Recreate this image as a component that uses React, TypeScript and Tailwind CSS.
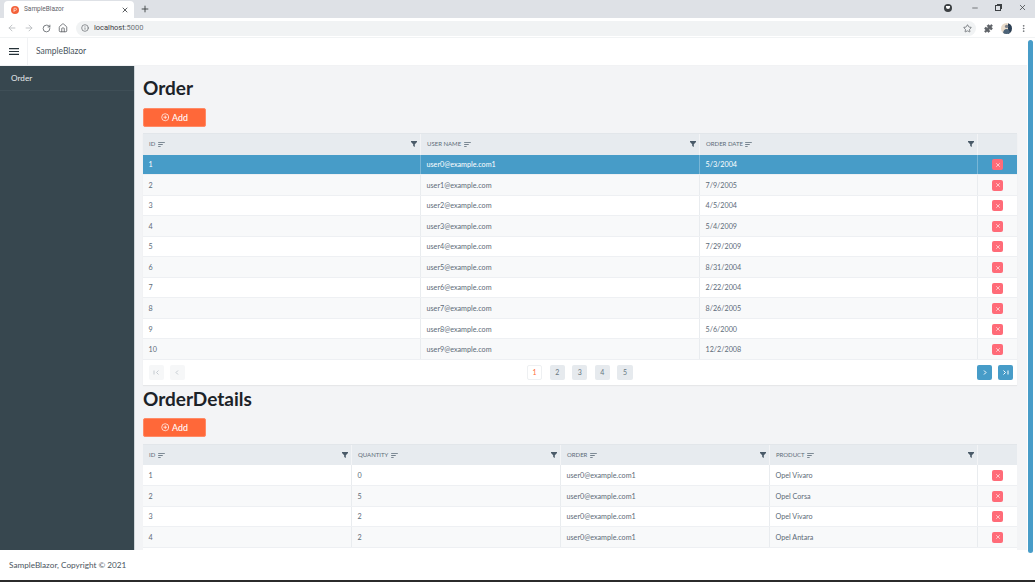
import React from "react";
import {
  ArrowLeft,
  ArrowRight,
  RotateCw,
  Home,
  Info,
  Star,
  Puzzle,
  EllipsisVertical,
  X,
  Plus,
  Minus,
  CirclePlus,
} from "lucide-react";

const FONT = "font-['Lato','Noto_Sans',sans-serif]";

const orders = [
  ["1", "user0@example.com1", "5/3/2004"],
  ["2", "user1@example.com", "7/9/2005"],
  ["3", "user2@example.com", "4/5/2004"],
  ["4", "user3@example.com", "5/4/2009"],
  ["5", "user4@example.com", "7/29/2009"],
  ["6", "user5@example.com", "8/31/2004"],
  ["7", "user6@example.com", "2/22/2004"],
  ["8", "user7@example.com", "8/26/2005"],
  ["9", "user8@example.com", "5/6/2000"],
  ["10", "user9@example.com", "12/2/2008"],
];

const details = [
  ["1", "0", "user0@example.com1", "Opel Vivaro"],
  ["2", "5", "user0@example.com1", "Opel Corsa"],
  ["3", "2", "user0@example.com1", "Opel Vivaro"],
  ["4", "2", "user0@example.com1", "Opel Antara"],
];

const SortIcon = () => (
  <svg width="7" height="5" viewBox="0 0 8 6" className="ml-[2.5px]">
    <path d="M0 .5h8M0 3h5.5M0 5.5h3" stroke="#5b6b78" strokeWidth="1" fill="none" />
  </svg>
);

const FilterIcon = () => (
  <svg width="6" height="6" viewBox="0 0 6 6">
    <path d="M0 0h6v1L3.8 3.2V6L2.2 5V3.2L0 1z" fill="#4a5a68" />
  </svg>
);

const AddButton = () => (
  <button className="flex h-[19px] w-[62.5px] items-center justify-center gap-[3px] rounded-[2px] border border-[#ff8a66] bg-[#ff6839] text-[8.8px] font-medium text-white">
    <CirclePlus size={8.5} strokeWidth={2} />
    Add
  </button>
);

const DeleteButton = () => (
  <div className="flex h-[11px] w-[11px] items-center justify-center rounded-[2px] bg-[#ff6b78]">
    <X size={6} strokeWidth={3} className="text-[#ffe3e3]" />
  </div>
);

const PageButton = ({ children, active }: { children: React.ReactNode; active?: boolean }) => (
  <div
    className={
      active
        ? "flex h-[15px] w-[15.2px] items-center justify-center rounded-[2px] border border-[#eef0f2] bg-white text-[7px] text-[#ff6839]"
        : "flex h-[15px] w-[15.2px] items-center justify-center rounded-[2px] bg-[#e6eaee] text-[7px] text-[#66757f]"
    }
  >
    {children}
  </div>
);

const NavButton = ({ d, enabled }: { d: string; enabled?: boolean }) => (
  <div
    className={
      enabled
        ? "flex h-[15px] w-[15px] items-center justify-center rounded-[2px] bg-[#479cc8]"
        : "flex h-[15px] w-[15px] items-center justify-center rounded-[2px] bg-[#f6f7f8]"
    }
  >
    <svg width="7" height="5" viewBox="0 0 7 5">
      <path d={d} stroke={enabled ? "#ffffff" : "#c4cad0"} strokeWidth="1" fill="none" />
    </svg>
  </div>
);

function DataTable({
  headers,
  rows,
  columns,
  selected,
}: {
  headers: string[];
  rows: string[][];
  columns: string;
  selected?: number;
}) {
  return (
    <div className="w-[874px] text-[7.2px] leading-none text-[#5d6b78]">
      <div className="grid h-[21.5px] border-t border-[#e2e6ea] bg-[#e7ebef]" style={{ gridTemplateColumns: columns }}>
        {headers.map((h) => (
          <div key={h} className="flex items-center justify-between border-r border-[#f3f4f6] pl-[6px] pr-[3px]">
            <div className="flex items-center text-[6px] text-[#5d6b78]">
              {h}
              <SortIcon />
            </div>
            <FilterIcon />
          </div>
        ))}
        <div />
      </div>
      {rows.map((row, i) => {
        const isSelected = i === selected;
        const stripe = isSelected ? "bg-[#479cc8] text-white" : i % 2 === 0 ? "bg-white" : "bg-[#f8f9fa]";
        return (
          <div
            key={row[0]}
            className={`grid h-[20.55px] border-b border-[#eef0f3] ${stripe}`}
            style={{ gridTemplateColumns: columns }}
          >
            {row.map((cell, j) => (
              <div
                key={j}
                className={`flex items-center border-r pl-[5.5px] pt-[1px] ${isSelected ? "border-[#79b6d6]" : "border-[#e9ecef]"}`}
              >
                {cell}
              </div>
            ))}
            <div className="flex items-center justify-center pt-[1px]">
              <DeleteButton />
            </div>
          </div>
        );
      })}
    </div>
  );
}

export default function App() {
  return (
    <div className={`flex h-[582px] w-[1035px] flex-col overflow-hidden bg-white ${FONT}`}>
      {/* browser tab strip */}
      <div className="flex h-[18px] items-end bg-[#dee1e6] font-['Roboto',sans-serif]">
        <div className="ml-[4px] flex h-[17px] w-[130px] items-center rounded-t-[4px] bg-white pl-[7px] pr-[5px]">
          <svg width="8" height="8" viewBox="0 0 8 8">
            <circle cx="4" cy="4" r="4" fill="#f4623a" />
            <path d="M3 6V2.2h1.4a1 1 0 010 2.2H3" stroke="#ffe0d6" strokeWidth="0.8" fill="none" />
          </svg>
          <span className="ml-[5px] text-[6.5px] text-[#5f6368]">SampleBlazor</span>
          <X size={8} strokeWidth={2.5} className="ml-auto text-[#3c4043]" />
        </div>
        <Plus size={10} strokeWidth={2.2} className="mb-[4px] ml-[6px] text-[#3c4043]" />
        <div className="mb-[6px] ml-auto flex items-center pr-[8px]">
          <div className="mr-[19px] flex h-[8px] w-[8px] items-center justify-center rounded-full bg-[#3c4043]">
            <div className="h-[3px] w-[4px] rounded-b-full bg-white" />
          </div>
          <Minus size={8} className="mr-[16px] text-[#3c4043]" />
          <div className="relative mr-[17px] h-[6px] w-[6px] border border-[#3c4043]">
            <div className="absolute -right-[2px] -top-[2px] h-[5px] w-[5px] border-r border-t border-[#3c4043]" />
          </div>
          <X size={9} className="text-[#3c4043]" />
        </div>
      </div>
      {/* browser toolbar */}
      <div className="flex h-[19px] items-center bg-white pl-[7px] pt-[1px]">
        <ArrowLeft size={10} className="shrink-0 text-[#b5b8bc]" />
        <ArrowRight size={10} className="ml-[7px] shrink-0 text-[#b5b8bc]" />
        <RotateCw size={9} strokeWidth={2.2} className="ml-[7.5px] shrink-0 text-[#5f6368]" />
        <Home size={10} strokeWidth={2} className="ml-[7.5px] shrink-0 text-[#5f6368]" />
        <div className="ml-[8px] flex h-[15px] w-[900px] shrink-0 items-center rounded-full bg-[#f1f3f4] pl-[5px] pr-[4.5px]">
          <Info size={8} className="text-[#5f6368]" />
          <span className="ml-[5px] font-['Roboto',sans-serif] text-[7.5px] text-[#3c4043]">
            localhost<span className="text-[#70757a]">:5000</span>
          </span>
          <Star size={9} className="ml-auto text-[#5f6368]" />
        </div>
        <Puzzle size={9} fill="#5f6368" className="ml-[8px] shrink-0 text-[#5f6368]" />
        <svg width="11" height="11" viewBox="0 0 11 11" className="ml-[7.5px] shrink-0">
          <defs>
            <clipPath id="avatar">
              <circle cx="5.5" cy="5.5" r="5.5" />
            </clipPath>
          </defs>
          <g clipPath="url(#avatar)">
            <rect width="11" height="11" fill="#e9dccb" />
            <rect x="7" width="4" height="11" fill="#2a3f55" />
            <circle cx="5.6" cy="3.4" r="1.7" fill="#7d8088" />
            <path d="M2 11c0-3.5 1.5-5 3.6-5S9 7.5 9 11z" fill="#4c6378" />
          </g>
        </svg>
        <EllipsisVertical size={9} className="ml-[7px] shrink-0 text-[#5f6368]" />
      </div>
      <div className="h-[1px] bg-[#f1f3f4]" />
      {/* app */}
      <div className="flex min-h-0 flex-1">
        <div className="flex min-w-0 flex-1 flex-col">
          <div className="flex h-[28px] items-center border-b border-[#f1f2f4] bg-white">
            <div className="flex h-full w-[28px] items-center justify-center border-r border-[#f1f2f4]">
              <svg width="10" height="7" viewBox="0 0 10 7">
                <path d="M0 .6h10M0 3.5h10M0 6.4h10" stroke="#263238" strokeWidth="1.1" />
              </svg>
            </div>
            <span className="ml-[8px] text-[8.5px] text-[#4a5560]">SampleBlazor</span>
          </div>
          <div className="flex min-h-0 flex-1">
            <div className="w-[135px] shrink-0 border-r border-[#cfd6da] bg-[#37474f]">
              <div className="flex h-[25px] items-center border-b border-[#3f4f57] pl-[11px] text-[8.2px] text-[#e6eaec]">
                Order
              </div>
            </div>
            <div className="min-w-0 flex-1 overflow-hidden bg-[#f3f4f6] pl-[8px]">
              <h1 className="mt-[9px] h-[33px] text-[19px] font-bold leading-[26px] text-[#1c2228]">Order</h1>
              <AddButton />
              <div className="mt-[6px] w-[874px] bg-white shadow-[0_1px_1px_rgba(0,0,0,0.05)]">
                <DataTable
                  headers={["ID", "USER NAME", "ORDER DATE"]}
                  rows={orders}
                  columns="278px 279px 278px 39px"
                  selected={0}
                />
                <div className="flex h-[25px] items-center pl-[5.5px] pr-[4px]">
                  <div className="flex gap-[6px]">
                    <NavButton d="M1 .5v4M5.5 .5L3.5 2.5l2 2" />
                    <NavButton d="M4 .5L2 2.5l2 2" />
                  </div>
                  <div className="ml-[342.5px] flex gap-[7.4px]">
                    <PageButton active>1</PageButton>
                    <PageButton>2</PageButton>
                    <PageButton>3</PageButton>
                    <PageButton>4</PageButton>
                    <PageButton>5</PageButton>
                  </div>
                  <div className="ml-auto flex gap-[6px]">
                    <NavButton enabled d="M3 .5l2 2-2 2" />
                    <NavButton enabled d="M1.5 .5l2 2-2 2M6 .5v4" />
                  </div>
                </div>
              </div>
              <h1 className="mt-[1.5px] h-[31.5px] text-[19px] font-bold leading-[26px] text-[#1c2228]">OrderDetails</h1>
              <AddButton />
              <div className="mt-[7px]">
                <DataTable
                  headers={["ID", "QUANTITY", "ORDER", "PRODUCT"]}
                  rows={details}
                  columns="209px 209px 209px 208px 39px"
                />
                <div className="h-[20px] w-[874px] bg-white" />
              </div>
            </div>
          </div>
        </div>
        {/* scrollbar */}
        <div className="relative z-10 w-[8px] shrink-0 bg-white">
          <div className="ml-[1px] mt-[2px] h-[513px] w-[5px] rounded-full bg-[#479cc8]" />
        </div>
      </div>
      {/* footer */}
      <div className="flex h-[30px] items-center bg-white pl-[9px] text-[8.2px] text-[#4a5560]">
        SampleBlazor, Copyright © 2021
      </div>
      <div className="h-[2px] bg-[#2b2b2b]" />
    </div>
  );
}
